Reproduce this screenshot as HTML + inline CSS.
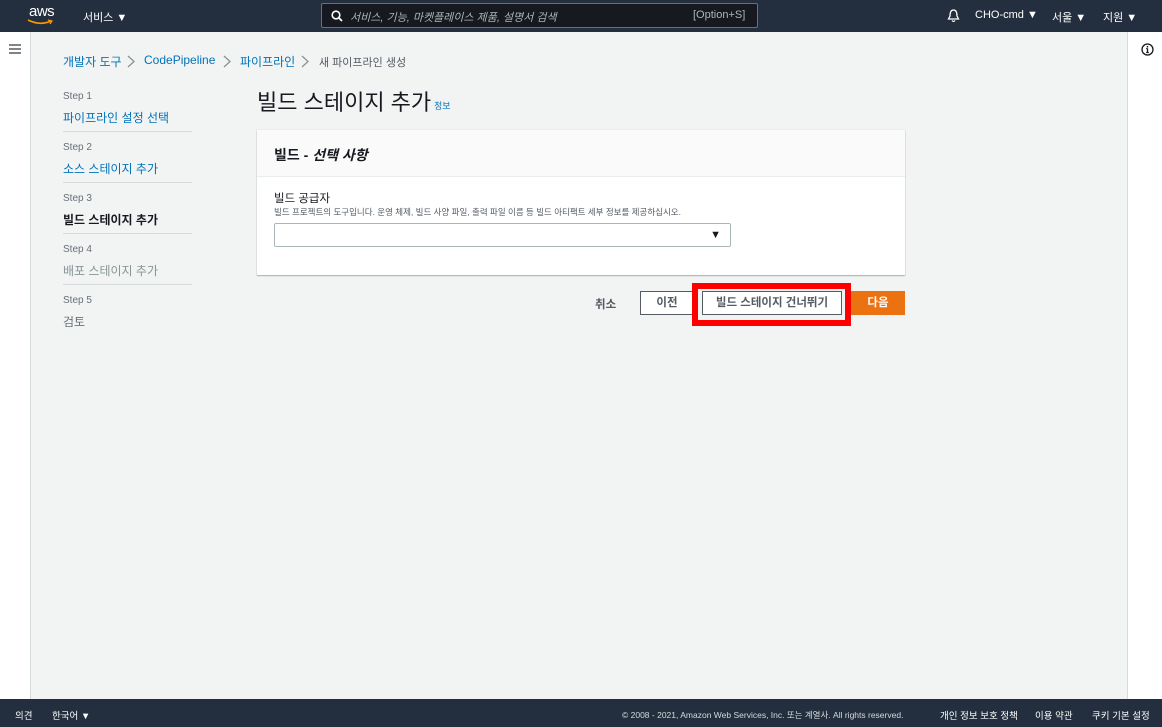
<!DOCTYPE html>
<html><head><meta charset="utf-8"><style>
*{box-sizing:border-box;margin:0;padding:0}
body{width:1162px;height:727px;overflow:hidden;background:#f2f3f3;font-family:"Liberation Sans","Noto Sans CJK KR",sans-serif;color:#16191f;position:relative}
.top{position:absolute;left:0;top:0;width:1162px;height:32px;background:#232f3e;color:#fff;font-size:11px}
.top span{position:absolute;top:9px}
.search{position:absolute;left:321px;top:3px;width:437px;height:25px;border:1px solid #687078;border-radius:2px;background:#16191f}
.left{position:absolute;left:0;top:32px;width:31px;height:667px;background:#fff;border-right:1px solid #d5dbdb}
.right{position:absolute;left:1127px;top:32px;width:35px;height:667px;background:#fff;border-left:1px solid #d5dbdb}
.foot{position:absolute;left:0;top:699px;width:1162px;height:28px;background:#232f3e;color:#fff;font-size:9.5px}
.foot span{position:absolute;top:9px}
.bc{position:absolute;top:53px;font-size:12px;color:#0073bb}
.chev{position:absolute;top:55px}
.step{position:absolute;left:63px;font-size:10px;color:#687078}
.sl{position:absolute;left:63px;font-size:12px}
.hr{position:absolute;left:63px;width:129px;height:1px;background:#d5dbdb}
.card{position:absolute;left:257px;top:130px;width:648px;height:145px;background:#fff;box-shadow:0 1px 1px rgba(0,28,36,.3),0 0 0 1px #eaeded}
.btn{position:absolute;top:291px;height:24px;font-size:11.5px;font-weight:bold;text-align:center;padding-top:4px;line-height:14px}
</style></head><body>
<div class="top">
<span style="left:29px;top:3px;font-size:15px;letter-spacing:-0.5px">aws</span>
<svg style="position:absolute;left:27px;top:19px" width="26" height="7"><path d="M1 1 Q13 7 24 2" stroke="#ff9900" stroke-width="1.6" fill="none"/><path d="M21 1 L25 2 L23 5" stroke="#ff9900" stroke-width="1.2" fill="none"/></svg>
<span style="left:83px">서비스 ▼</span>
<div class="search">
<svg style="position:absolute;left:9px;top:6px" width="12" height="12"><circle cx="5" cy="5" r="3.8" stroke="#fff" stroke-width="1.6" fill="none"/><path d="M8 8 L11 11" stroke="#fff" stroke-width="1.8"/></svg>
<span style="left:28px;top:5px;color:#aab7b8;font-style:italic">서비스, 기능, 마켓플레이스 제품, 설명서 검색</span>
<span style="left:371px;top:5px;color:#aab7b8">[Option+S]</span></div>
<svg style="position:absolute;left:947px;top:9px" width="13" height="14"><path d="M6.5 1 C3.5 1 3 4 3 7 L1.5 10 H11.5 L10 7 C10 4 9.5 1 6.5 1Z" stroke="#fff" stroke-width="1.3" fill="none"/><path d="M5 11.5 Q6.5 13.5 8 11.5" stroke="#fff" stroke-width="1.2" fill="none"/></svg>
<span style="left:975px">CHO-cmd ▼</span>
<span style="left:1052px">서울 ▼</span>
<span style="left:1103px">지원 ▼</span>
</div>
<div class="left"><svg style="position:absolute;left:9px;top:12px" width="12" height="10"><path d="M0 1H12M0 5H12M0 9H12" stroke="#545b64" stroke-width="1.5"/></svg></div>
<div class="right"><svg style="position:absolute;left:13px;top:11px" width="13" height="13"><circle cx="6.5" cy="6.5" r="5.5" stroke="#16191f" stroke-width="1.3" fill="none"/><path d="M6.5 5.5V9.5M5.2 9.5H7.8M5.2 5.5H6.5" stroke="#16191f" stroke-width="1.3"/><circle cx="6.5" cy="3.7" r=".8" fill="#16191f"/></svg></div>

<span class="bc" style="left:63px">개발자 도구</span>
<svg class="chev" style="left:127px" width="8" height="13"><path d="M1 1 L7 6.5 L1 12" stroke="#879596" stroke-width="1.3" fill="none"/></svg>
<span class="bc" style="left:144px">CodePipeline</span>
<svg class="chev" style="left:223px" width="8" height="13"><path d="M1 1 L7 6.5 L1 12" stroke="#879596" stroke-width="1.3" fill="none"/></svg>
<span class="bc" style="left:240px">파이프라인</span>
<svg class="chev" style="left:301px" width="8" height="13"><path d="M1 1 L7 6.5 L1 12" stroke="#879596" stroke-width="1.3" fill="none"/></svg>
<span class="bc" style="left:319px;color:#545b64;font-size:11px;top:54px">새 파이프라인 생성</span>

<span class="step" style="top:91px">Step 1</span><span class="sl" style="top:109px;color:#0073bb">파이프라인 설정 선택</span><div class="hr" style="top:131px"></div>
<span class="step" style="top:142px">Step 2</span><span class="sl" style="top:160px;color:#0073bb">소스 스테이지 추가</span><div class="hr" style="top:182px"></div>
<span class="step" style="top:193px">Step 3</span><span class="sl" style="top:211px;font-weight:bold">빌드 스테이지 추가</span><div class="hr" style="top:233px"></div>
<span class="step" style="top:244px">Step 4</span><span class="sl" style="top:262px;color:#879596">배포 스테이지 추가</span><div class="hr" style="top:284px"></div>
<span class="step" style="top:295px">Step 5</span><span class="sl" style="top:313px;color:#687078">검토</span>

<span style="position:absolute;left:257px;top:85px;font-size:22px">빌드 스테이지 추가</span>
<span style="position:absolute;left:434px;top:99px;font-size:9px;color:#0073bb">정보</span>

<div class="card">
<div style="height:47px;background:#fafafa;border-bottom:1px solid #eaeded"></div>
<span style="position:absolute;left:17px;top:15px;font-size:14px;font-weight:bold">빌드 - <i>선택 사항</i></span>
<span style="position:absolute;left:17px;top:60px;font-size:11.5px">빌드 공급자</span>
<span style="position:absolute;left:17px;top:76px;font-size:8.5px;color:#545b64">빌드 프로젝트의 도구입니다. 운영 체제, 빌드 사양 파일, 출력 파일 이름 등 빌드 아티팩트 세부 정보를 제공하십시오.</span>
<div style="position:absolute;left:17px;top:93px;width:457px;height:24px;border:1px solid #aab7b8;border-radius:2px"><span style="position:absolute;right:9px;top:5px;font-size:11px">▼</span></div>
</div>

<span style="position:absolute;left:595px;top:296px;font-size:11.5px;font-weight:bold;color:#545b64">취소</span>
<div class="btn" style="left:640px;width:54px;border:1px solid #545b64;background:#fff;color:#545b64">이전</div>
<div style="position:absolute;left:692px;top:283px;width:159px;height:43px;border:6px solid #f00;"></div>
<div class="btn" style="left:702px;width:140px;border:1px solid #545b64;background:#fff;color:#545b64">빌드 스테이지 건너뛰기</div>
<div class="btn" style="left:851px;width:54px;background:#ec7211;color:#fff;border:1px solid #ec7211">다음</div>

<div class="foot">
<span style="left:15px">의견</span>
<span style="left:52px">한국어 ▼</span>
<span style="left:622px;font-size:8.5px;top:10px;color:#d5dbdb">© 2008 - 2021, Amazon Web Services, Inc. 또는 계열사. All rights reserved.</span>
<span style="left:940px">개인 정보 보호 정책</span>
<span style="left:1035px">이용 약관</span>
<span style="left:1092px">쿠키 기본 설정</span>
</div>
</body></html>
